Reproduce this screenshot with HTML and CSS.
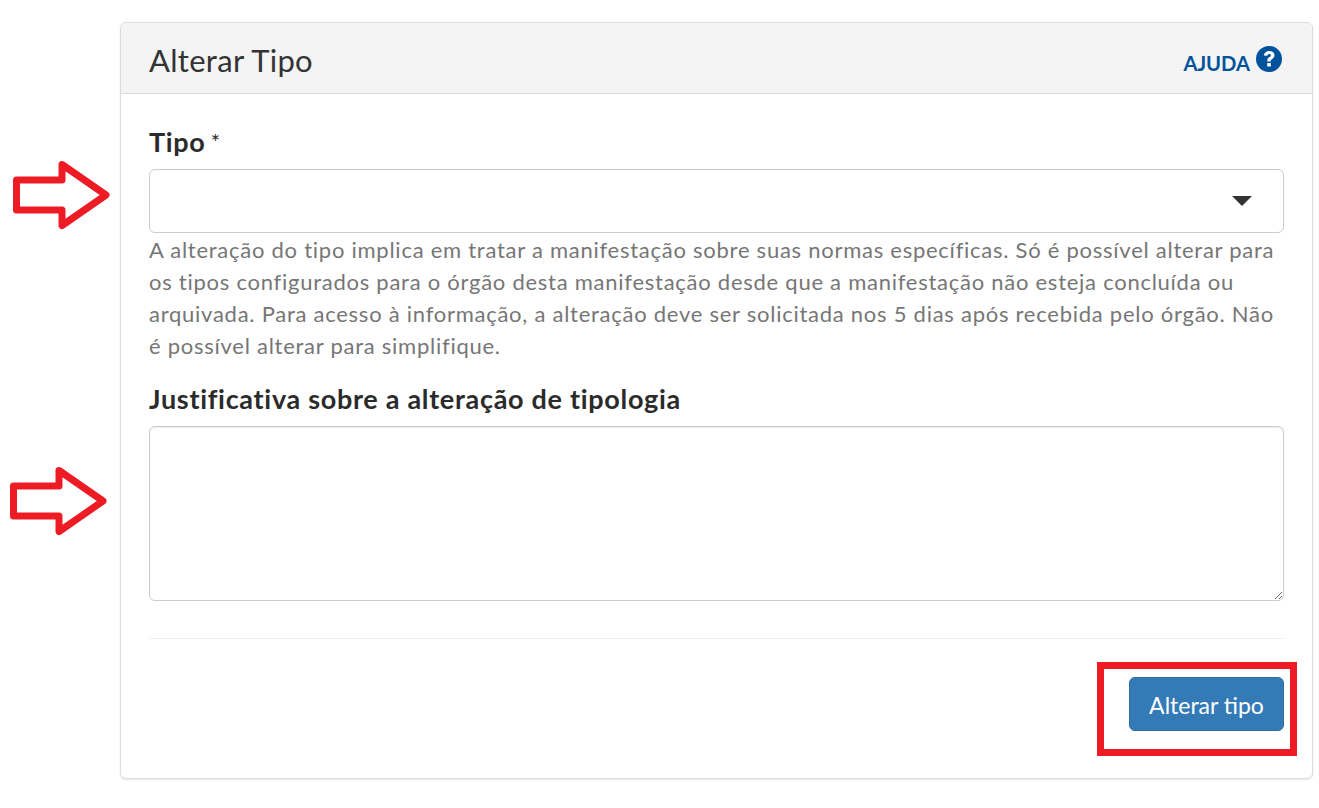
FILE: index.html
```html
<!DOCTYPE html>
<html lang="pt-BR">
<head>
    <meta charset="UTF-8">
    <meta name="viewport" content="width=device-width, initial-scale=1.0">
    <title>Alterar Tipo</title>
    <link rel="stylesheet" href="styles.css">
</head>
<body>
    <div class="panel">
        <div class="panel-heading">
            <h3 class="panel-title">Alterar Tipo</h3>
            <a class="help-link" href="#">AJUDA
                <svg class="help-icon" viewBox="0 0 26 26" width="26" height="26" aria-hidden="true">
                    <circle cx="13" cy="13" r="13" fill="#00529c"/>
                    <path d="M7.800 9.600C8.300 6.600 10.400 5 13.300 5c3 0 5.200 1.800 5.200 4.300 0 1.900-1 2.900-2.300 3.700-1.100.7-1.400 1-1.400 1.900v.6h-3.500v-.9c0-1.800.8-2.700 2.100-3.500 1-.6 1.500-1 1.500-1.700 0-.8-.7-1.300-1.600-1.300-1 0-1.700.6-2.100 1.700z" fill="#fff"/>
                    <rect x="11.200" y="17" width="3.600" height="3.600" rx=".5" fill="#fff"/>
                </svg>
            </a>
        </div>
        <form class="panel-body">
            <label class="field-label" for="tipo">Tipo <span class="required">*</span></label>
            <div class="select-box" id="tipo"><span class="caret"></span></div>
            <p class="help-text">A alteração do tipo implica em tratar a manifestação sobre suas normas específicas. Só é possível alterar para os tipos configurados para o órgão desta manifestação desde que a manifestação não esteja concluída ou arquivada. Para acesso à informação, a alteração deve ser solicitada nos 5 dias após recebida pelo órgão. Não é possível alterar para simplifique.</p>

            <label class="field-label field-label-second" for="justificativa">Justificativa sobre a alteração de tipologia</label>
            <textarea class="text-box" id="justificativa"></textarea>

            <hr class="divider">

            <div class="actions">
                <button type="button" class="btn">Alterar tipo</button>
            </div>
        </form>
    </div>

    <!-- red annotations on top of the screenshot -->
    <svg class="mark mark-one" width="100" height="72" viewBox="0 0 100 72" aria-hidden="true">
        <path d="M4.500 20H50V4.500L94 35 50 65.500V50H4.500Z" fill="none" stroke="#ed1c24" stroke-width="7" stroke-linejoin="round"/>
    </svg>
    <svg class="mark mark-two" width="100" height="72" viewBox="0 0 100 72" aria-hidden="true">
        <path d="M4.500 20H50V4.500L94 35 50 65.500V50H4.500Z" fill="none" stroke="#ed1c24" stroke-width="7" stroke-linejoin="round"/>
    </svg>
    <div class="mark-box"></div>
</body>
</html>
```

FILE: styles.css
```css
html, body {
    height: 100%;
}

body {
    margin: 0;
    padding: 22px 6px 0 120px;
    background-color: #fff;
    font-family: Lato, "Open Sans", sans-serif;
    color: #333;
    overflow: hidden;
}

.panel {
    height: 757px;
    box-sizing: border-box;
    background-color: #fff;
    border: 1px solid #ddd;
    border-radius: 6px;
    box-shadow: 0 1px 2px rgba(0, 0, 0, 0.1);
}

.panel-heading {
    display: flex;
    align-items: center;
    justify-content: space-between;
    height: 71px;
    box-sizing: border-box;
    padding: 4px 30px 0 28px;
    background-color: #f4f4f4;
    border-bottom: 1px solid #ddd;
    border-radius: 6px 6px 0 0;
}

.panel-title {
    margin: 0;
    font-size: 31px;
    font-weight: 400;
    letter-spacing: 0.3px;
    color: #333;
}

.help-link {
    display: flex;
    align-items: center;
    gap: 6px;
    margin-top: 5px;
    color: #00529c;
    font-size: 20.2px;
    font-weight: 700;
    text-decoration: none;
}

.help-icon {
    display: block;
    margin-top: -7px;
}

.panel-body {
    padding: 32px 28px 0;
}

.field-label {
    display: block;
    font-size: 27px;
    line-height: 32px;
    font-weight: 700;
    letter-spacing: 0.7px;
    color: #2b2b2b;
}

.required {
    margin-left: -2px;
    font-size: 22px;
    font-weight: 400;
    vertical-align: 2px;
}

.select-box {
    position: relative;
    height: 64px;
    box-sizing: border-box;
    margin-top: 11px;
    border: 1px solid #ccc;
    border-radius: 6px;
}

.caret {
    position: absolute;
    top: 26px;
    right: 31px;
    border-top: 10px solid #333;
    border-left: 10px solid transparent;
    border-right: 10px solid transparent;
}

.help-text {
    margin: 1px 0 0;
    font-size: 22px;
    line-height: 32px;
    letter-spacing: 0.74px;
    color: #767676;
}

.field-label-second {
    margin-top: 21px;
}

.text-box {
    display: block;
    width: 100%;
    height: 175px;
    box-sizing: border-box;
    margin-top: 11px;
    border: 1px solid #ccc;
    border-radius: 6px;
    box-shadow: inset 0 1px 1px rgba(0, 0, 0, 0.075);
}

.divider {
    margin: 37px 0 0;
    border: 0;
    border-top: 1px solid #eee;
}

.actions {
    display: flex;
    justify-content: flex-end;
    margin-top: 38px;
}

.btn {
    width: 155px;
    height: 54px;
    padding-top: 3px;
    background-color: #337ab7;
    color: #fff;
    border: 1px solid #2e6da4;
    border-radius: 6px;
    font-family: inherit;
    font-size: 23px;
}

.mark {
    position: absolute;
    display: block;
}

.mark-one {
    left: 12px;
    top: 160px;
}

.mark-two {
    left: 9px;
    top: 466px;
}

.mark-box {
    position: absolute;
    left: 1097px;
    top: 662px;
    width: 200px;
    height: 94px;
    box-sizing: border-box;
    border: 7px solid #ed1c24;
}
```
